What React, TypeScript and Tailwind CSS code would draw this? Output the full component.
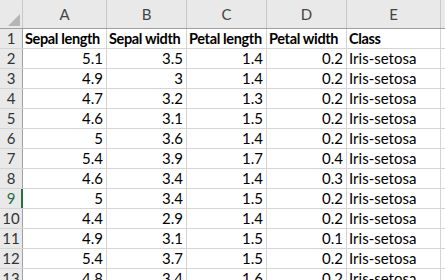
import React from "react";

const rows: string[][] = [
  ["5.1", "3.5", "1.4", "0.2"],
  ["4.9", "3", "1.4", "0.2"],
  ["4.7", "3.2", "1.3", "0.2"],
  ["4.6", "3.1", "1.5", "0.2"],
  ["5", "3.6", "1.4", "0.2"],
  ["5.4", "3.9", "1.7", "0.4"],
  ["4.6", "3.4", "1.4", "0.3"],
  ["5", "3.4", "1.5", "0.2"],
  ["4.4", "2.9", "1.4", "0.2"],
  ["4.9", "3.1", "1.5", "0.1"],
  ["5.4", "3.7", "1.5", "0.2"],
  ["4.8", "3.4", "1.6", "0.2"],
];

const widths = ["w-[84px]", "w-[80px]", "w-[80px]", "w-[80px]", "w-[94px]"];
const letters = ["A", "B", "C", "D", "E"];
const heads = ["Sepal length", "Sepal width", "Petal length", "Petal width", "Class"];

export default function App() {
  return (
    <div
      className="w-[445px] h-[280px] overflow-hidden bg-white text-[15px] text-black"
      style={{ fontFamily: "Lato, 'Liberation Sans', sans-serif" }}
    >
      {/* column header row */}
      <div className="flex h-[29px] bg-[#e9e9e9] border-b border-[#a0a0a0]">
        <div className="relative w-[23px] shrink-0 border-r border-[#c8c8c8]">
          <svg className="absolute left-[8px] top-[14px]" width="12" height="12" viewBox="0 0 12 12">
            <polygon points="12,0 12,12 0,12" fill="#b5b5b5" />
          </svg>
        </div>
        {letters.map((l, i) => (
          <div
            key={l}
            className={`${widths[i]} shrink-0 border-r border-[#c8c8c8] flex items-end justify-center pb-[3px] text-[#444444]`}
          >
            {l}
          </div>
        ))}
        <div className="flex-1" />
      </div>
      {/* header data row */}
      <div className="flex h-[20px] border-b border-[#d4d4d4]">
        <div className="w-[23px] shrink-0 bg-[#e9e9e9] border-r border-[#a0a0a0] flex items-center justify-center text-[#333]">
          1
        </div>
        {heads.map((h, i) => (
          <div
            key={h}
            className={`${widths[i]} shrink-0 border-r border-[#d4d4d4] flex items-center px-[2px] text-[14.5px] font-bold tracking-[-0.35px] whitespace-nowrap overflow-hidden`}
          >
            {h}
          </div>
        ))}
        <div className="flex-1" />
      </div>
      {rows.map((r, ri) => {
        const n = ri + 2;
        const active = n === 9;
        return (
          <div key={n} className="flex h-[20px] border-b border-[#d4d4d4]">
            <div
              className={`w-[23px] shrink-0 bg-[#e9e9e9] flex items-center justify-center ${
                active
                  ? "border-r-2 border-[#217346] text-[#217346] pl-[1px]"
                  : "border-r border-[#a0a0a0] text-[#333]"
              }`}
            >
              {n}
            </div>
            {r.map((v, ci) => (
              <div
                key={ci}
                className={`${widths[ci]} shrink-0 border-r border-[#d4d4d4] flex items-center justify-end px-[3px]`}
              >
                {v}
              </div>
            ))}
            <div className={`${widths[4]} shrink-0 border-r border-[#d4d4d4] flex items-center px-[2px]`}>
              Iris-setosa
            </div>
            <div className="flex-1" />
          </div>
        );
      })}
    </div>
  );
}
